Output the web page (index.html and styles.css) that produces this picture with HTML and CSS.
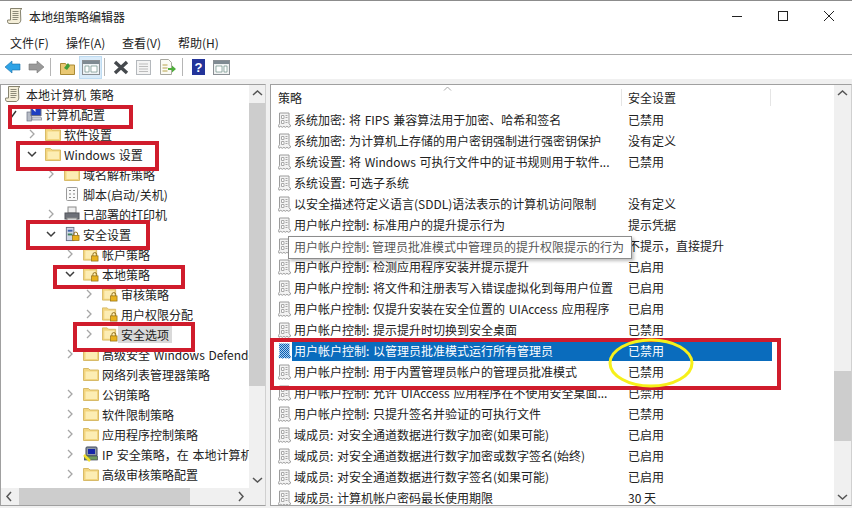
FILE: index.html
```html
<!DOCTYPE html>
<html lang="zh-CN">
<head>
  <meta charset="utf-8">
  <title>本地组策略编辑器</title>
  <link rel="stylesheet" href="styles.css">
</head>
<body>
  <!-- shared icons -->
  <svg class="defs" width="0" height="0">
    <defs>
      <pattern id="dither" width="2" height="2" patternUnits="userSpaceOnUse">
        <rect width="2" height="2" fill="#0b5fb0"/>
        <rect width="1" height="1" fill="#a9cdf0"/>
        <rect x="1" y="1" width="1" height="1" fill="#a9cdf0"/>
      </pattern>
      <symbol id="scroll" viewBox="0 0 16 16">
        <path d="M3.500.5H15c-1.500.8-1.800 2-1.500 3.500l.3 8c0 1.500-1 3-2.500 3.500H2c-1.500-.5-1.800-2-1.300-3.500h2.800z" fill="#f4eed8" stroke="#86836f"/>
        <path d="M5.500 3.500h6M5.500 5.500h6M5.500 7.500h6M5.500 9.500h6M5.500 11.500h5" stroke="#8d8a78"/>
      </symbol>
      <symbol id="policy" viewBox="0 0 14 16">
        <path d="M1.500 1h9.500v10.500l1.800 2.500-2.200 1.300-1.700-1-1.500 1-1.500-1-1.500 1-1.700-1-1.700 1-.5-1.800 1-1.700z" fill="#f3f3f3" stroke="#9c9c9c"/>
        <path d="M3.500 3.500h2.500v3H3.500zM3.500 8.500h2.500v3H3.500z" fill="#fff" stroke="#a8a8a8"/>
        <path d="M7.500 3.500h2M7.500 5.500h2M7.500 8.500h2M7.500 10.500h2" stroke="#a8a8a8"/>
      </symbol>
      <symbol id="policy-sel" viewBox="0 0 14 16">
        <path d="M1 .5h10.500v11l1.800 3-2.300 1.300-1.700-1-1.500 1-1.500-1-1.500 1-1.700-1-1.700 1-.8-2 1-2z" fill="url(#dither)"/>
      </symbol>
      <symbol id="folder" viewBox="0 0 16 16">
        <path d="M.5 2.500h5L7 4h8.500v10.500H.5z" fill="#f3d57f" stroke="#d8bb68"/>
        <path d="M2.500 5.500h11.500v7.500H2.500z" fill="#fcedb4"/>
      </symbol>
      <symbol id="folder-lock" viewBox="0 0 17 16">
        <path d="M.5 1.500h5L7 3h7.500v11.500H.5z" fill="#f3d57f" stroke="#d8bb68"/>
        <path d="M2.500 4.500h10.500v8.500H2.500z" fill="#fcedb4"/>
        <path d="M10.500 10V8.500a2 2 0 0 1 4 0V10" fill="none" stroke="#8c6a14"/>
        <rect x="9" y="10" width="7" height="5.500" fill="#e8b21e" stroke="#8c6a14" stroke-width=".7"/>
      </symbol>
      <symbol id="computer" viewBox="0 0 16 16">
        <rect x="1" y="6" width="4.500" height="9" fill="#b7bcc6" stroke="#6a7082" stroke-width=".7"/>
        <rect x="5" y="1.500" width="10" height="8" fill="#1d3fc2" stroke="#6a7082"/>
        <path d="M6.500 3h3v3z" fill="#fff"/>
        <path d="M6 11h9l1 3H6z" fill="#cfd3da" stroke="#7d8392" stroke-width=".7"/>
      </symbol>
      <symbol id="script" viewBox="0 0 16 16">
        <rect x="2.500" y="1.500" width="11" height="13" rx="1" fill="#fafafa" stroke="#9a9a9a"/>
        <path d="M5 4.500h2M9 4.500h2M5 8h2M9 8h2M5 11.500h2M9 11.500h2" stroke="#8a8a8a"/>
      </symbol>
      <symbol id="printer" viewBox="0 0 16 16">
        <rect x="4" y="1" width="8" height="6" fill="#eee" stroke="#8a8a8a"/>
        <rect x="1" y="7" width="14" height="6" fill="#6d7078" stroke="#54565c"/>
        <rect x="3" y="12" width="10" height="3" fill="#d8d8d8" stroke="#888"/>
      </symbol>
      <symbol id="security" viewBox="0 0 17 17">
        <rect x="2.500" y="1.500" width="8" height="14" fill="#cfd6e4" stroke="#6b7386"/>
        <rect x="4" y="4" width="5" height="2" fill="#3f63a8"/>
        <rect x="4" y="8" width="5" height="2" fill="#3f7f5a"/>
        <path d="M10.500 10V8.500a2 2 0 0 1 4 0V10" fill="none" stroke="#8c6a14"/>
        <rect x="9" y="10" width="7" height="5.500" fill="#e8b21e" stroke="#8c6a14" stroke-width=".7"/>
      </symbol>
      <symbol id="ipsec" viewBox="0 0 16 16">
        <rect x="3" y="1" width="11" height="9" rx="1" fill="#8f9aa8" stroke="#3f4756"/>
        <rect x="5" y="3" width="7" height="5" fill="#1726a8"/>
        <rect x="1.500" y="10" width="13" height="4" fill="#6f9a5c" stroke="#3f4756" stroke-width=".7"/>
        <path d="M1 9l6 6" stroke="#f2df2c" stroke-width="2.500"/>
      </symbol>
      <symbol id="down" viewBox="0 0 10 10"><path d="M1 3l4 4 4-4" fill="none" stroke="#3c3c3c" stroke-width="1.500"/></symbol>
      <symbol id="right" viewBox="0 0 10 10"><path d="M3 1l4 4-4 4" fill="none" stroke="#a6a6a6" stroke-width="1.300"/></symbol>
      <symbol id="check" viewBox="0 0 10 10"><path d="M2 5l2 2.500L8 2" fill="none" stroke="#333" stroke-width="1.400"/></symbol>
    </defs>
  </svg>

  <div class="window">
    <header class="titlebar">
      <svg class="app-icon"><use href="#scroll"/></svg>
      <span class="title">本地组策略编辑器</span>
      <div class="controls">
        <svg width="12" height="12" viewBox="0 0 12 12"><path d="M1 6.500h10" stroke="#222"/></svg>
        <svg width="12" height="12" viewBox="0 0 12 12"><rect x="1.500" y="1.500" width="9" height="9" fill="none" stroke="#222"/></svg>
        <svg width="12" height="12" viewBox="0 0 12 12"><path d="M1 1l10 10M11 1L1 11" stroke="#222"/></svg>
      </div>
    </header>

    <nav class="menubar">
      <span>文件(F)</span>
      <span>操作(A)</span>
      <span>查看(V)</span>
      <span>帮助(H)</span>
    </nav>

    <div class="toolbar">
      <svg class="tool-back" width="16" height="14" viewBox="0 0 16 14"><path d="M0 7l7-6v3h8v6H7v3z" fill="#2ea3e6" stroke="#1a6fa8" stroke-width=".6"/></svg>
      <svg class="tool-fwd" width="16" height="14" viewBox="0 0 16 14"><path d="M16 7L9 1v3H1v6h8v3z" fill="#9a9a9a" stroke="#777" stroke-width=".6"/></svg>
      <i class="tool-sep"></i>
      <svg class="tool-up" width="15" height="16" viewBox="0 0 15 16"><path d="M.5 4.500h5l1 1.500h8v9.500H.5z" fill="#e9c873" stroke="#a98a35"/><path d="M4 9l4-5 2 3-3 4z" fill="#3f9e3a"/></svg>
      <span class="tool-active">
        <svg width="18" height="15" viewBox="0 0 18 15"><rect x=".5" y=".5" width="17" height="14" fill="#eef2f4" stroke="#8a8f94"/><rect x="1" y="1" width="16" height="3" fill="#7f8a92"/><path d="M3 6h4v6H3zM9 6h6v6H9z" fill="#fff" stroke="#6f8f88" stroke-width=".7"/></svg>
      </span>
      <i class="tool-sep sep-tight"></i>
      <svg class="tool-x" width="16" height="15" viewBox="0 0 16 15"><path d="M2 2l12 11M14 2L2 13" stroke="#45494d" stroke-width="3.400"/></svg>
      <svg class="tool-doc" width="15" height="15" viewBox="0 0 15 15"><rect x=".5" y=".5" width="14" height="14" fill="#f4f4f4" stroke="#b4b8bc"/><path d="M3 4h9M3 6.500h9M3 9h9M3 11.500h9" stroke="#bcbcbc"/></svg>
      <svg class="tool-export" width="17" height="16" viewBox="0 0 17 16"><path d="M1.500.5h8l3 3v12h-11z" fill="#fbfbf4" stroke="#a8a8a0"/><path d="M3.500 6h5M3.500 9h5M3.500 12h5" stroke="#b8a24a"/><path d="M9 9h4V6.500l4 3.500-4 3.500V11H9z" fill="#4fae3c"/></svg>
      <i class="tool-sep"></i>
      <svg class="tool-help" width="13" height="16" viewBox="0 0 13 16"><rect width="13" height="16" fill="#23349a"/><text x="6.500" y="13" class="help-mark">?</text></svg>
      <svg class="tool-pane" width="17" height="15" viewBox="0 0 17 15"><rect x=".5" y=".5" width="16" height="14" fill="#f0f2f2" stroke="#8a8f94"/><rect x="1" y="1" width="15" height="3" fill="#7f8a92"/><path d="M3 6h6v6H3zM11 6h3v6h-3z" fill="#fff" stroke="#6f8f88" stroke-width=".7"/></svg>
    </div>

    <main class="panes">
      <section class="pane tree-pane">
        <div class="tree">
          <div class="node level-0"><svg class="ico"><use href="#scroll"/></svg><span>本地计算机 策略</span></div>
          <div class="node level-1"><svg class="arrow"><use href="#check"/></svg><svg class="ico"><use href="#computer"/></svg><span>计算机配置</span></div>
          <div class="node level-2"><svg class="arrow"><use href="#right"/></svg><svg class="ico"><use href="#folder"/></svg><span>软件设置</span></div>
          <div class="node level-2"><svg class="arrow"><use href="#down"/></svg><svg class="ico"><use href="#folder"/></svg><span>Windows 设置</span></div>
          <div class="node level-3"><svg class="arrow"><use href="#right"/></svg><svg class="ico"><use href="#folder"/></svg><span>域名解析策略</span></div>
          <div class="node level-3"><i class="arrow"></i><svg class="ico"><use href="#script"/></svg><span>脚本(启动/关机)</span></div>
          <div class="node level-3"><svg class="arrow"><use href="#right"/></svg><svg class="ico"><use href="#printer"/></svg><span>已部署的打印机</span></div>
          <div class="node level-3"><svg class="arrow"><use href="#down"/></svg><svg class="ico"><use href="#security"/></svg><span>安全设置</span></div>
          <div class="node level-4"><svg class="arrow"><use href="#right"/></svg><svg class="ico"><use href="#folder-lock"/></svg><span>帐户策略</span></div>
          <div class="node level-4"><svg class="arrow"><use href="#down"/></svg><svg class="ico"><use href="#folder-lock"/></svg><span>本地策略</span></div>
          <div class="node level-5"><svg class="arrow"><use href="#right"/></svg><svg class="ico"><use href="#folder-lock"/></svg><span>审核策略</span></div>
          <div class="node level-5"><svg class="arrow"><use href="#right"/></svg><svg class="ico"><use href="#folder-lock"/></svg><span>用户权限分配</span></div>
          <div class="node level-5"><svg class="arrow"><use href="#right"/></svg><svg class="ico"><use href="#folder-lock"/></svg><span class="picked">安全选项</span></div>
          <div class="node level-4"><svg class="arrow"><use href="#right"/></svg><svg class="ico"><use href="#folder"/></svg><span>高级安全 Windows Defender 防火墙</span></div>
          <div class="node level-4"><i class="arrow"></i><svg class="ico"><use href="#folder"/></svg><span>网络列表管理器策略</span></div>
          <div class="node level-4"><svg class="arrow"><use href="#right"/></svg><svg class="ico"><use href="#folder"/></svg><span>公钥策略</span></div>
          <div class="node level-4"><svg class="arrow"><use href="#right"/></svg><svg class="ico"><use href="#folder"/></svg><span>软件限制策略</span></div>
          <div class="node level-4"><svg class="arrow"><use href="#right"/></svg><svg class="ico"><use href="#folder"/></svg><span>应用程序控制策略</span></div>
          <div class="node level-4"><svg class="arrow"><use href="#right"/></svg><svg class="ico"><use href="#ipsec"/></svg><span>IP 安全策略，在 本地计算机</span></div>
          <div class="node level-4"><svg class="arrow"><use href="#right"/></svg><svg class="ico"><use href="#folder"/></svg><span>高级审核策略配置</span></div>
        </div>
        <div class="vbar">
          <svg class="bar-btn" viewBox="0 0 17 17"><path d="M4 10l4.500-4 4.500 4" fill="none" stroke="#555" stroke-width="1.500"/></svg>
          <div class="thumb tree-thumb"></div>
          <svg class="bar-btn bar-end" viewBox="0 0 17 17"><path d="M4 7l4.500 4 4.500-4" fill="none" stroke="#555" stroke-width="1.500"/></svg>
        </div>
        <div class="hbar">
          <svg class="bar-btn" viewBox="0 0 17 17"><path d="M10 4L6 8.500l4 4.500" fill="none" stroke="#555" stroke-width="1.500"/></svg>
          <div class="thumb hbar-thumb"></div>
          <svg class="bar-btn bar-end" viewBox="0 0 17 17"><path d="M7 4l4 4.500L7 13" fill="none" stroke="#555" stroke-width="1.500"/></svg>
        </div>
        <div class="corner"></div>
      </section>

      <section class="pane list-pane">
        <div class="list">
          <div class="list-head">
            <span class="head-name">策略</span>
            <span class="head-value">安全设置</span>
            <svg class="sort" width="9" height="5" viewBox="0 0 9 5"><path d="M1 4.500l3.500-3.500L8 4.500" fill="none" stroke="#a8a8a8"/></svg>
          </div>
          <div class="row"><svg class="doc"><use href="#policy"/></svg><div class="cells"><span class="name">系统加密: 将 FIPS 兼容算法用于加密、哈希和签名</span><span>已禁用</span></div></div>
          <div class="row"><svg class="doc"><use href="#policy"/></svg><div class="cells"><span class="name">系统加密: 为计算机上存储的用户密钥强制进行强密钥保护</span><span>没有定义</span></div></div>
          <div class="row"><svg class="doc"><use href="#policy"/></svg><div class="cells"><span class="name">系统设置: 将 Windows 可执行文件中的证书规则用于软件...</span><span>已禁用</span></div></div>
          <div class="row"><svg class="doc"><use href="#policy"/></svg><div class="cells"><span class="name">系统设置: 可选子系统</span><span></span></div></div>
          <div class="row"><svg class="doc"><use href="#policy"/></svg><div class="cells"><span class="name">以安全描述符定义语言(SDDL)语法表示的计算机访问限制</span><span>没有定义</span></div></div>
          <div class="row"><svg class="doc"><use href="#policy"/></svg><div class="cells"><span class="name">用户帐户控制: 标准用户的提升提示行为</span><span>提示凭据</span></div></div>
          <div class="row"><svg class="doc"><use href="#policy"/></svg><div class="cells"><span class="name">用户帐户控制: 管理员批准模式中管理员的提升权限提示的行为</span><span>不提示，直接提升</span></div></div>
          <div class="row"><svg class="doc"><use href="#policy"/></svg><div class="cells"><span class="name">用户帐户控制: 检测应用程序安装并提示提升</span><span>已启用</span></div></div>
          <div class="row"><svg class="doc"><use href="#policy"/></svg><div class="cells"><span class="name">用户帐户控制: 将文件和注册表写入错误虚拟化到每用户位置</span><span>已启用</span></div></div>
          <div class="row"><svg class="doc"><use href="#policy"/></svg><div class="cells"><span class="name">用户帐户控制: 仅提升安装在安全位置的 UIAccess 应用程序</span><span>已启用</span></div></div>
          <div class="row"><svg class="doc"><use href="#policy"/></svg><div class="cells"><span class="name">用户帐户控制: 提示提升时切换到安全桌面</span><span>已禁用</span></div></div>
          <div class="row selected"><svg class="doc"><use href="#policy-sel"/></svg><div class="cells"><span class="name">用户帐户控制: 以管理员批准模式运行所有管理员</span><span>已禁用</span></div></div>
          <div class="row"><svg class="doc"><use href="#policy"/></svg><div class="cells"><span class="name">用户帐户控制: 用于内置管理员帐户的管理员批准模式</span><span>已禁用</span></div></div>
          <div class="row"><svg class="doc"><use href="#policy"/></svg><div class="cells"><span class="name">用户帐户控制: 允许 UIAccess 应用程序在不使用安全桌面...</span><span>已禁用</span></div></div>
          <div class="row"><svg class="doc"><use href="#policy"/></svg><div class="cells"><span class="name">用户帐户控制: 只提升签名并验证的可执行文件</span><span>已禁用</span></div></div>
          <div class="row"><svg class="doc"><use href="#policy"/></svg><div class="cells"><span class="name">域成员: 对安全通道数据进行数字加密(如果可能)</span><span>已启用</span></div></div>
          <div class="row"><svg class="doc"><use href="#policy"/></svg><div class="cells"><span class="name">域成员: 对安全通道数据进行数字加密或数字签名(始终)</span><span>已启用</span></div></div>
          <div class="row"><svg class="doc"><use href="#policy"/></svg><div class="cells"><span class="name">域成员: 对安全通道数据进行数字签名(如果可能)</span><span>已启用</span></div></div>
          <div class="row"><svg class="doc"><use href="#policy"/></svg><div class="cells"><span class="name">域成员: 计算机帐户密码最长使用期限</span><span>30 天</span></div></div>
        </div>
        <div class="vbar">
          <svg class="bar-btn" viewBox="0 0 17 17"><path d="M4 10l4.500-4 4.500 4" fill="none" stroke="#555" stroke-width="1.500"/></svg>
          <div class="thumb list-thumb"></div>
          <svg class="bar-btn bar-end" viewBox="0 0 17 17"><path d="M4 7l4.500 4 4.500-4" fill="none" stroke="#555" stroke-width="1.500"/></svg>
        </div>
      </section>
    </main>

    <!-- things lying over the window: tooltip and the red / yellow markup -->
    <div class="tooltip">用户帐户控制: 管理员批准模式中管理员的提升权限提示的行为</div>
    <div class="mark mark-computer"></div>
    <div class="mark mark-windows"></div>
    <div class="mark mark-security"></div>
    <div class="mark mark-local"></div>
    <div class="mark mark-options"></div>
    <div class="mark mark-rows"></div>
    <svg class="ring" width="90" height="52" viewBox="0 0 90 52"><ellipse cx="45" cy="26" rx="41" ry="23" fill="none" stroke="#f6f01a" stroke-width="3"/></svg>
  </div>
</body>
</html>
```

FILE: styles.css
```css
* {
  box-sizing: border-box;
}

body {
  margin: 0;
  font-family: "Noto Sans CJK SC", "Liberation Sans", sans-serif;
  font-size: 12px;
  color: #222;
  background: #fff;
}

.defs {
  position: absolute;
}

.window {
  position: relative;
  width: 852px;
  height: 508px;
  overflow: hidden;
  background: #f0f0f0;
  border-top: 1px solid #8c8c8c;
}

/* title bar */
.titlebar {
  display: flex;
  align-items: center;
  height: 33px;
  padding: 0 0 3px 7px;
  background: #fff;
}

.app-icon {
  width: 16px;
  height: 16px;
  margin-right: 6px;
}

.controls {
  display: flex;
  gap: 34px;
  margin-left: auto;
  padding-right: 17px;
}

/* menu */
.menubar {
  display: flex;
  align-items: center;
  gap: 14px;
  height: 21px;
  padding: 0 0 3px 10px;
  background: #fff;
  border-bottom: 1px solid #a8a8a8;
}

.menubar span {
  width: 42px;
  white-space: nowrap;
}

/* toolbar */
.toolbar {
  display: flex;
  align-items: center;
  height: 24px;
  padding-left: 5px;
  background: #fff;
}

.tool-fwd {
  margin-left: 7px;
}

.tool-sep {
  width: 1px;
  height: 18px;
  margin: 0 9px 0 6px;
  background: #b5b5b5;
}

.sep-tight {
  margin: 0 8px 0 2px;
}

.tool-active {
  display: flex;
  align-items: center;
  justify-content: center;
  width: 23px;
  height: 23px;
  margin-left: 4px;
  background: #d9ebf9;
  border: 1px solid #bfdcf2;
}

.tool-doc {
  margin-left: 7px;
}

.tool-export {
  margin-left: 8px;
}

.tool-pane {
  margin-left: 8px;
}

.help-mark {
  font: bold 13px "Liberation Sans", sans-serif;
  fill: #fff;
  text-anchor: middle;
}

/* panes */
.panes {
  display: grid;
  grid-template-columns: 266px 582px;
  gap: 4px;
  height: 422px;
  margin-top: 5px;
}

.pane {
  background: #fff;
  border: 1px solid #a0a0a0;
  border-right-color: #d0d0d0;
  overflow: hidden;
}

.tree-pane {
  display: grid;
  grid-template-columns: 248px 17px;
  grid-template-rows: 403px 17px;
}

.tree {
  margin-top: -1px;
  overflow: hidden;
}

.node {
  display: flex;
  align-items: center;
  height: 20px;
  white-space: nowrap;
  word-spacing: 1px;
}

.level-0 { padding-left: 4px; }
.level-1 { padding-left: 5px; }
.level-2 { padding-left: 24px; }
.level-3 { padding-left: 43px; }
.level-4 { padding-left: 62px; }
.level-5 { padding-left: 81px; }

.arrow {
  flex: none;
  width: 10px;
  height: 10px;
  margin: 0 8px 0 2px;
}

.ico {
  flex: none;
  width: 16px;
  height: 16px;
  margin-right: 3px;
}

.level-0 .ico {
  margin-right: 5px;
}

.picked {
  padding: 0 3px;
  margin-left: -3px;
  background: #d9d9d9;
}

/* scrollbars */
.vbar {
  display: flex;
  flex-direction: column;
  background: #f0f0f0;
}

.hbar {
  display: flex;
  background: #f0f0f0;
}

.corner {
  background: #f0f0f0;
}

.bar-btn {
  flex: none;
  width: 17px;
  height: 17px;
}

.bar-end {
  margin-top: auto;
}

.hbar .bar-end {
  margin-left: auto;
  margin-top: 0;
}

.thumb {
  background: #cdcdcd;
}

.tree-thumb {
  height: 283px;
  margin-top: 1px;
}

.hbar-thumb {
  width: 171px;
  margin-left: 1px;
}

.list-thumb {
  height: 70px;
  margin-top: 269px;
}

/* policy list */
.list-pane {
  display: flex;
}

.list {
  flex: 1;
  overflow: hidden;
}

.list-head {
  position: relative;
  display: flex;
  align-items: center;
  height: 25px;
  margin-bottom: -1px;
}

.head-name {
  width: 351px;
  padding-left: 7px;
  border-right: 1px solid #e5e5e5;
}

.head-value {
  width: 149px;
  padding-left: 6px;
  border-right: 1px solid #e5e5e5;
}

.sort {
  position: absolute;
  left: 172px;
  top: 1px;
}

.row {
  display: flex;
  align-items: center;
  height: 21px;
  padding-left: 7px;
}

.doc {
  flex: none;
  width: 14px;
  height: 16px;
}

.cells {
  display: flex;
  align-items: center;
  width: 480px;
  height: 21px;
  padding-left: 2px;
  white-space: nowrap;
}

.name {
  width: 334px;
  overflow: hidden;
  word-spacing: 1px;
}

.selected .cells {
  color: #fff;
  background: #0a6cbd;
}

/* overlays */
.tooltip {
  position: absolute;
  left: 288px;
  top: 235px;
  width: 344px;
  height: 23px;
  padding: 1px 5px;
  color: #575757;
  white-space: nowrap;
  background: #fff;
  border: 1px solid #8c8c8c;
  box-shadow: 2px 2px 3px rgba(0, 0, 0, 0.25);
}

.mark {
  position: absolute;
  border: 4px solid #d01c2c;
}

.mark-computer { left: 8px; top: 104px; width: 125px; height: 24px; }
.mark-windows { left: 16px; top: 140px; width: 143px; height: 30px; }
.mark-security { left: 26px; top: 219px; width: 124px; height: 30px; }
.mark-local { left: 53px; top: 264px; width: 132px; height: 24px; }
.mark-options { left: 73px; top: 321px; width: 122px; height: 30px; }
.mark-rows { left: 270px; top: 337px; width: 511px; height: 52px; }

.ring {
  position: absolute;
  left: 606px;
  top: 336px;
}
```
